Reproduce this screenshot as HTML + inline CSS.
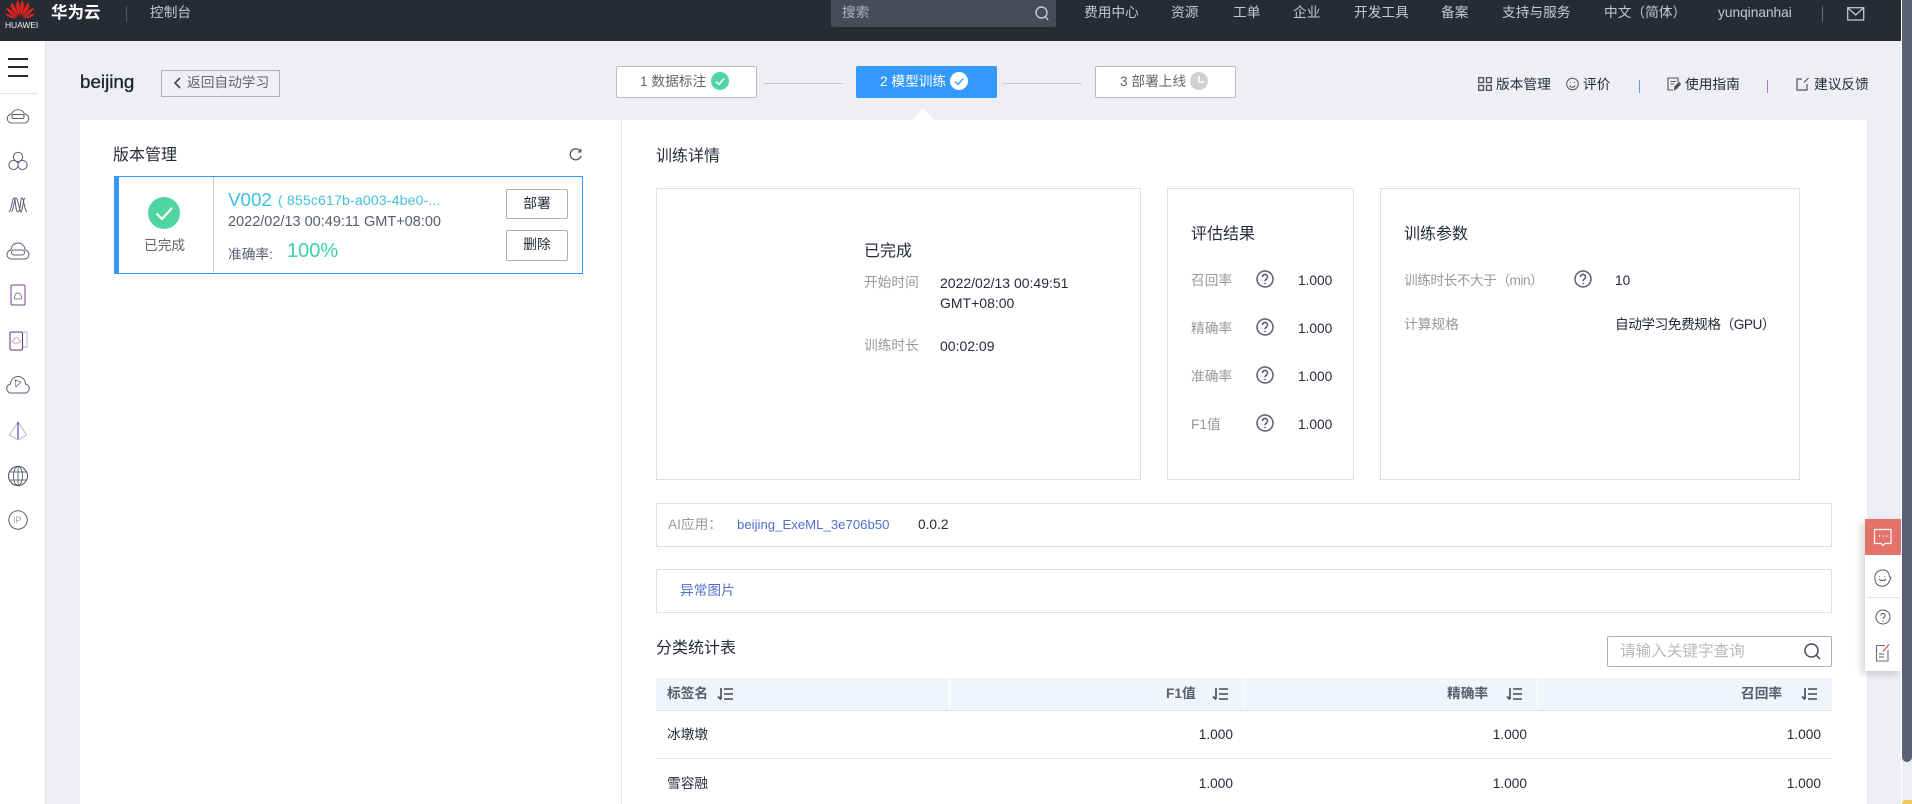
<!DOCTYPE html>
<html lang="zh-CN"><head><meta charset="utf-8"><title>beijing</title>
<style>
html,body{margin:0;padding:0;width:1912px;height:804px;overflow:hidden;background:#eeeff5}
body{position:relative;font-family:"Liberation Sans","Noto Sans CJK SC",sans-serif;font-size:13.7px;color:#252b3a}
.a{position:absolute;box-sizing:border-box}
.t{position:absolute;white-space:nowrap;line-height:20px;height:20px}
.n{color:#c6c8cf}
.g{color:#999}
.h{font-size:16px;color:#252b3a}
.box{position:absolute;box-sizing:border-box;border:1px solid #dfdfdf;background:#fff}
.btn{position:absolute;box-sizing:border-box;border:1px solid #adb0b8;border-radius:2px;background:#fff;text-align:center;line-height:28px;color:#252b3a}
.step{position:absolute;box-sizing:border-box;top:66px;height:32px;width:141px;border:1px solid #b9bbc3;border-radius:2px;background:#fff}
svg{position:absolute;overflow:visible;fill:none}
.th{font-weight:700;color:#575d6c}
.r{text-align:right}
</style></head><body>
<!-- header -->
<div class="a" style="left:0;top:0;width:1901px;height:41px;background:#282b33"></div>
<svg style="left:5px;top:0" width="30" height="22" viewBox="0 0 30 22">
<g fill="#e1231f">
<path d="M13 0C10 3 11 10 14.3 16.5C15 11 15.5 5 13 0Z"/><path d="M17 0C20 3 19 10 15.7 16.5C15 11 14.5 5 17 0Z"/>
<path d="M6.5 2.5C4.5 6 7.5 12 13.2 16.8C12 11 10.5 6 6.5 2.5Z"/><path d="M23.5 2.5C25.5 6 22.5 12 16.8 16.8C18 11 19.5 6 23.5 2.5Z"/>
<path d="M1.5 7.5C1 11 6 15 12.2 17.6C9.5 13 6 9.5 1.5 7.5Z"/><path d="M28.5 7.5C29 11 24 15 17.8 17.6C20.5 13 24 9.5 28.5 7.5Z"/>
<path d="M0 13.5C2 17 7 18.5 11.8 18.5C8 16 4 14 0 13.5Z"/><path d="M30 13.5C28 17 23 18.5 18.2 18.5C22 16 26 14 30 13.5Z"/>
</g></svg>
<div class="t" style="left:5px;top:15px;font-size:8.5px;color:#f0f0f0;letter-spacing:-.1px">HUAWEI</div>
<div class="t" style="left:51px;top:3px;font-size:16.5px;font-weight:700;color:#fff">华为云</div>
<div class="a" style="left:126px;top:6px;width:1px;height:16px;background:#55585f"></div>
<div class="t n" style="left:150px;top:3px">控制台</div>
<div class="a" style="left:831px;top:0;width:225px;height:27px;background:#484c5a;border-radius:0 0 2px 2px"></div>
<div class="t" style="left:842px;top:3px;color:#b0b3bb">搜索</div>
<svg style="left:1035px;top:6px" width="14" height="16" stroke="#c6c8cf" stroke-width="1.4"><circle cx="6.5" cy="6.5" r="5.5"/><path d="M10.5 10.5L13 14"/></svg>
<div class="t n" style="left:1084px;top:3px">费用中心</div>
<div class="t n" style="left:1171px;top:3px">资源</div>
<div class="t n" style="left:1233px;top:3px">工单</div>
<div class="t n" style="left:1293px;top:3px">企业</div>
<div class="t n" style="left:1354px;top:3px">开发工具</div>
<div class="t n" style="left:1441px;top:3px">备案</div>
<div class="t n" style="left:1502px;top:3px">支持与服务</div>
<div class="t n" style="left:1604px;top:3px">中文（简体）</div>
<div class="t n" style="left:1718px;top:3px">yunqinanhai</div>
<div class="a" style="left:1822px;top:6px;width:1px;height:16px;background:#6a6d75"></div>
<svg style="left:1847px;top:7px" width="18" height="14" stroke="#c6c8cf" stroke-width="1.3"><rect x=".7" y=".7" width="16" height="12.3"/><path d="M1 1L8.7 8L16.5 1"/></svg>

<!-- scrollbar -->
<div class="a" style="left:1901px;top:0;width:1px;height:804px;background:#fff"></div>
<div class="a" style="left:1902px;top:0;width:10px;height:762px;background:#5d6175;border-radius:0 0 5px 5px"></div>
<div class="a" style="left:1902px;top:800px;width:10px;height:4px;background:#f1c65a;border-radius:4px 0 0 0"></div>

<!-- sidebar -->
<div class="a" style="left:0;top:41px;width:46px;height:763px;background:#fff;border-right:1px solid #e2e3e8"></div>
<div class="a" style="left:8px;top:58px;width:20px;height:2px;background:#252b3a"></div>
<div class="a" style="left:8px;top:66px;width:20px;height:2px;background:#252b3a"></div>
<div class="a" style="left:8px;top:75px;width:20px;height:2px;background:#252b3a"></div>
<div class="a" style="left:0;top:93px;width:38px;height:1px;background:#dfe1e6"></div>
<svg style="left:0;top:100px" width="46" height="440" stroke="#5b6078" stroke-width="1">
<path d="M12 24a4.5 4.5 0 0 1-.5-9a7 7 0 0 1 13 0a4.5 4.5 0 0 1-.5 9Z" transform="translate(0,-1)"/><rect x="12" y="14.5" width="12" height="4" rx="1.5"/><path d="M11 23h14" stroke="#bbb" stroke-width="2"/>
<circle cx="18" cy="57" r="4.6"/><circle cx="13.5" cy="65" r="4.6"/><circle cx="22.5" cy="65" r="4.6"/>
<path d="M9 112C12 110 12 98 14 98C16 98 15 112 18 112C21 112 20 98 22 98C24 98 24 110 27 112M11.5 112C14 110 14 98 16 98C18 98 19 110 21 112C23 110 23 98 25 98" />
<path d="M12 159a4.5 4.5 0 0 1-1-9a7 7 0 0 1 14 0a4.5 4.5 0 0 1-1 9Z"/><rect x="11.5" y="150" width="13" height="5" rx="2.5"/>
<rect x="11" y="185" width="14" height="20" rx="1.5" stroke="#7a3d8f"/><path d="M15 199a2 2 0 0 1 0-3a3 3 0 0 1 6 0a2 2 0 0 1 0 3Z" stroke-width=".8"/>
<rect x="10" y="232" width="12.500" height="18" rx="1.500" stroke="#6a2d80"/><path d="M23 232h4v15h-4M14 243a1.500 1.500 0 0 1 0-3a2.500 2.500 0 0 1 5 0a1.500 1.500 0 0 1 0 3Z" stroke-width=".7" stroke="#999"/>
<path d="M12 293a4.500 4.500 0 0 1-1.500-9a7.500 7.500 0 0 1 15 0a4.500 4.500 0 0 1-1.500 9Z"/><path d="M15 280l6 2l-5 5Z" stroke-width=".7"/>
<path d="M18 322L9.500 335L18 340L26.500 335Z" stroke="#aab" stroke-width=".8"/><path d="M18 322V339" stroke="#3f51b5" stroke-width="1.200"/>
<circle cx="18" cy="376" r="9.500" stroke="#444a5e"/><ellipse cx="18" cy="376" rx="4.500" ry="9.500" stroke="#444a5e" stroke-width=".8"/><path d="M9 372h18M9 380h18M18 366v20" stroke="#444a5e" stroke-width=".8"/>
<circle cx="18" cy="420" r="9.200"/></svg>
<div class="t" style="left:13px;top:510px;font-size:9px;color:#9a9ea8">IP</div>

<!-- title row -->
<div class="t" style="left:80px;top:70px;font-size:18.8px;line-height:24px;height:24px;color:#1f2433;-webkit-text-stroke:.35px #1f2433">beijing</div>
<div class="a" style="left:161px;top:70px;width:119px;height:27px;border:1px solid #adb0b8"></div>
<svg style="left:174px;top:77px" width="7" height="12" stroke="#444" stroke-width="1.600"><path d="M6 1L1 6L6 11"/></svg>
<div class="t" style="left:187px;top:73px;color:#666">返回自动学习</div>

<!-- steps -->
<div class="step" style="left:616px"></div>
<div class="t" style="left:640px;top:72px;color:#666">1 数据标注</div>
<svg style="left:711px;top:72px" width="18" height="18"><circle cx="9" cy="9" r="9" fill="#4fd4a4"/><path d="M5 9.500L8 12.500L13 6.500" stroke="#fff" stroke-width="1.500"/></svg>
<div class="a" style="left:764px;top:83px;width:79px;height:1px;background:#c4c6cc"></div>
<div class="a" style="left:856px;top:66px;width:141px;height:32px;background:#3399ff;border-radius:2px"></div>
<div class="t" style="left:880px;top:72px;color:#fff">2 模型训练</div>
<svg style="left:950px;top:72px" width="18" height="18"><circle cx="9" cy="9" r="9" fill="#fff"/><path d="M5 9.500L8 12.500L13 6.500" stroke="#3399ff" stroke-width="1.300"/></svg>
<div class="a" style="left:1003px;top:83px;width:79px;height:1px;background:#c4c6cc"></div>
<div class="step" style="left:1095px"></div>
<div class="t" style="left:1120px;top:72px;color:#666">3 部署上线</div>
<svg style="left:1190px;top:72px" width="18" height="18"><circle cx="9" cy="9" r="9" fill="#d0d0d2"/><path d="M9 4V10H14" stroke="#fff" stroke-width="1.600"/></svg>

<!-- top right links -->
<svg style="left:1478px;top:77px" width="14" height="14" stroke="#555" stroke-width="1.400"><rect x=".7" y=".7" width="4.800" height="4.800"/><rect x="8.500" y=".7" width="4.800" height="4.800"/><rect x=".7" y="8.500" width="4.800" height="4.800"/><rect x="8.500" y="8.500" width="4.800" height="4.800"/></svg>
<div class="t" style="left:1496px;top:75px">版本管理</div>
<svg style="left:1566px;top:77px" width="14" height="14" stroke="#555" stroke-width="1"><circle cx="6.500" cy="7" r="5.800"/><path d="M3.800 8.500a3 3 0 0 0 5.400 0M4.500 5v.8M8.500 5v.8"/></svg>
<div class="t" style="left:1583px;top:75px">评价</div>
<div class="a" style="left:1639px;top:80px;width:1px;height:13px;background:#5b9df0"></div>
<svg style="left:1667px;top:77px" width="14" height="14" stroke="#555" stroke-width="1.100"><path d="M11 5V1H1V13H6M3.500 4.500H9M3.500 7H7"/><path d="M7.500 12.500L8 9.500L12 5.500L13.500 7L9.500 11.500Z" fill="#555"/></svg>
<div class="t" style="left:1685px;top:75px">使用指南</div>
<div class="a" style="left:1767px;top:80px;width:1px;height:13px;background:#a77cc0"></div>
<svg style="left:1796px;top:77px" width="14" height="14" stroke="#555" stroke-width="1.200"><path d="M6 2H1V13H11V7M8 5.500L12.500 1"/></svg>
<div class="t" style="left:1814px;top:75px">建议反馈</div>

<!-- main white -->
<div class="a" style="left:80px;top:120px;width:1787px;height:684px;background:#fff"></div>
<div class="a" style="left:621px;top:120px;width:1px;height:684px;background:#dfe1e6"></div>
<svg style="left:912px;top:108px" width="22" height="12"><path d="M0 12L11 0L22 12Z" fill="#fff"/></svg>

<!-- left panel -->
<div class="t h" style="left:113px;top:146px">版本管理</div>
<svg style="left:569px;top:148px" width="13" height="13" stroke="#555" stroke-width="1.300"><path d="M11.500 3.500A5.500 5.500 0 1 0 12 8"/><path d="M12 .5V4H8.500" stroke-width="1"/></svg>
<div class="a" style="left:114px;top:176px;width:469px;height:98px;border:1px solid #3399ff;background:#fff"></div>
<div class="a" style="left:115px;top:177px;width:4px;height:96px;background:#3399ff"></div>
<div class="a" style="left:213px;top:177px;width:1px;height:96px;background:#c9cbd0"></div>
<svg style="left:148px;top:197px" width="32" height="32"><circle cx="16" cy="16" r="16" fill="#4fd4a4"/><path d="M8.500 16.500L14 22L24 11" stroke="#fff" stroke-width="2.200"/></svg>
<div class="t" style="left:144px;top:236px;color:#666">已完成</div>
<div class="t" style="left:228px;top:190px;font-size:18.8px;color:#3cbfe0">V002</div>
<div class="t" style="left:278px;top:191px;font-size:14.2px;color:#44c0dc;letter-spacing:.1px">( 855c617b-a003-4be0-...</div>
<div class="t" style="left:228px;top:212px;color:#575d6c;font-size:14.5px">2022/02/13 00:49:11 GMT+08:00</div>
<div class="t" style="left:228px;top:245px;color:#575d6c">准确率:</div>
<div class="t" style="left:287px;top:241px;font-size:20px;color:#3dd1a2">100%</div>
<div class="btn" style="left:506px;top:189px;width:62px;height:30px">部署</div>
<div class="btn" style="left:506px;top:230px;width:62px;height:31px">删除</div>

<!-- training details -->
<div class="t h" style="left:656px;top:147px">训练详情</div>
<div class="box" style="left:656px;top:188px;width:485px;height:292px"></div>
<div class="box" style="left:1167px;top:188px;width:187px;height:292px"></div>
<div class="box" style="left:1380px;top:188px;width:420px;height:292px"></div>

<div class="t h" style="left:864px;top:242px">已完成</div>
<div class="t g" style="left:864px;top:273px">开始时间</div>
<div class="t" style="left:940px;top:273px;font-size:14px">2022/02/13 00:49:51</div>
<div class="t" style="left:940px;top:293px;font-size:14px">GMT+08:00</div>
<div class="t g" style="left:864px;top:336px">训练时长</div>
<div class="t" style="left:940px;top:336px;font-size:14px">00:02:09</div>

<div class="t h" style="left:1191px;top:225px">评估结果</div>
<div class="t g" style="left:1191px;top:271px">召回率</div>
<div class="t g" style="left:1191px;top:319px">精确率</div>
<div class="t g" style="left:1191px;top:367px">准确率</div>
<div class="t g" style="left:1191px;top:415px">F1值</div>
<svg style="left:1256px;top:270px" width="18" height="164" stroke="#575d6c" stroke-width="1.500">
<g><circle cx="9" cy="9" r="8"/><path d="M6.500 7a2.500 2.500 0 1 1 3.800 2.100C9.400 9.700 9 10.200 9 11.200"/><path d="M9 12.800v1.400"/></g>
<g transform="translate(0,48)"><circle cx="9" cy="9" r="8"/><path d="M6.500 7a2.500 2.500 0 1 1 3.800 2.100C9.400 9.700 9 10.200 9 11.200"/><path d="M9 12.800v1.400"/></g>
<g transform="translate(0,96)"><circle cx="9" cy="9" r="8"/><path d="M6.500 7a2.500 2.500 0 1 1 3.800 2.100C9.400 9.700 9 10.200 9 11.200"/><path d="M9 12.800v1.400"/></g>
<g transform="translate(0,144)"><circle cx="9" cy="9" r="8"/><path d="M6.500 7a2.500 2.500 0 1 1 3.800 2.100C9.400 9.700 9 10.200 9 11.200"/><path d="M9 12.800v1.400"/></g>
</svg>
<div class="t" style="left:1298px;top:271px">1.000</div>
<div class="t" style="left:1298px;top:319px">1.000</div>
<div class="t" style="left:1298px;top:367px">1.000</div>
<div class="t" style="left:1298px;top:415px">1.000</div>

<div class="t h" style="left:1404px;top:225px">训练参数</div>
<div class="t g" style="left:1404px;top:271px;letter-spacing:-.5px">训练时长不大于（min）</div>
<svg style="left:1574px;top:270px" width="18" height="18" stroke="#575d6c" stroke-width="1.500"><circle cx="9" cy="9" r="8"/><path d="M6.500 7a2.500 2.500 0 1 1 3.800 2.100C9.400 9.700 9 10.200 9 11.200"/><path d="M9 12.800v1.400"/></svg>
<div class="t" style="left:1615px;top:271px">10</div>
<div class="t g" style="left:1404px;top:315px">计算规格</div>
<div class="t" style="left:1615px;top:315px;letter-spacing:-.5px">自动学习免费规格（GPU）</div>

<!-- AI app -->
<div class="box" style="left:656px;top:503px;width:1176px;height:44px"></div>
<div class="t g" style="left:668px;top:515px">AI应用：</div>
<div class="t" style="left:737px;top:515px;color:#526ecc;font-size:13.2px">beijing_ExeML_3e706b50</div>
<div class="t" style="left:918px;top:515px">0.0.2</div>
<div class="box" style="left:656px;top:569px;width:1176px;height:44px"></div>
<div class="t" style="left:680px;top:581px;color:#526ecc">异常图片</div>

<!-- table -->
<div class="t h" style="left:656px;top:639px">分类统计表</div>
<div class="a" style="left:1607px;top:636px;width:225px;height:31px;border:1px solid #adb0b8;border-radius:2px;background:#fff"></div>
<div class="t" style="left:1620px;top:642px;font-size:15.6px;color:#b8bac0">请输入关键字查询</div>
<svg style="left:1804px;top:643px" width="17" height="17" stroke="#444a5e" stroke-width="1.500"><circle cx="7.500" cy="7.500" r="6.500"/><path d="M12 12L16 16"/></svg>

<div class="a" style="left:656px;top:678px;width:1176px;height:33px;background:#f0f4fb;border-bottom:1px solid #dfe1e6"></div>
<div class="a" style="left:949px;top:678px;width:1px;height:32px;background:#fff"></div>
<div class="a" style="left:1243px;top:678px;width:1px;height:32px;background:#fff"></div>
<div class="a" style="left:1537px;top:678px;width:1px;height:32px;background:#fff"></div>
<div class="t th" style="left:667px;top:684px">标签名</div>
<div class="t th" style="left:1166px;top:684px">F1值</div>
<div class="t th" style="left:1447px;top:684px">精确率</div>
<div class="t th" style="left:1741px;top:684px">召回率</div>
<svg style="left:717px;top:688px" width="17" height="13" stroke="#444a5e" stroke-width="1.600"><path d="M4 0V11M1 8.500L4 11.500M7 1H16M7 6H16M7 11H16"/></svg>
<svg style="left:1212px;top:688px" width="17" height="13" stroke="#444a5e" stroke-width="1.600"><path d="M4 0V11M1 8.500L4 11.500M7 1H16M7 6H16M7 11H16"/></svg>
<svg style="left:1506px;top:688px" width="17" height="13" stroke="#444a5e" stroke-width="1.600"><path d="M4 0V11M1 8.500L4 11.500M7 1H16M7 6H16M7 11H16"/></svg>
<svg style="left:1801px;top:688px" width="17" height="13" stroke="#444a5e" stroke-width="1.600"><path d="M4 0V11M1 8.500L4 11.500M7 1H16M7 6H16M7 11H16"/></svg>

<div class="t" style="left:667px;top:725px">冰墩墩</div>
<div class="t r" style="left:1133px;width:100px;top:725px">1.000</div>
<div class="t r" style="left:1427px;width:100px;top:725px">1.000</div>
<div class="t r" style="left:1721px;width:100px;top:725px">1.000</div>
<div class="a" style="left:656px;top:758px;width:1176px;height:1px;background:#dfe1e6"></div>
<div class="t" style="left:667px;top:774px">雪容融</div>
<div class="t r" style="left:1133px;width:100px;top:774px">1.000</div>
<div class="t r" style="left:1427px;width:100px;top:774px">1.000</div>
<div class="t r" style="left:1721px;width:100px;top:774px">1.000</div>

<!-- floating -->
<div class="a" style="left:1865px;top:519px;width:36px;height:152px;background:#fff;box-shadow:-3px 3px 8px rgba(0,0,0,.18)"></div>
<div class="a" style="left:1865px;top:519px;width:36px;height:36px;background:#e6736b"></div>
<div class="a" style="left:1866px;top:597px;width:34px;height:1px;background:#dfe1e6"></div>
<svg style="left:1873px;top:528px" width="20" height="20" stroke="#fff" stroke-width="1.200"><path d="M1.500 1.500H18V15.500H12L10 17.500L8 15.500H1.500Z"/><path d="M6 8h1M9.500 8h1M13 8h1" stroke-width="1.500"/></svg>
<svg style="left:1874px;top:569px" width="18" height="19" stroke="#666" stroke-width="1.100"><path d="M15 13C13 17 8 18 5 16.500C1 15 .5 10 1 7C2 2.500 6 .5 10 1C13 1.500 15.500 4 15.500 8L17 8.500Z"/><path d="M5 10a4 3 0 0 0 7 0M5.500 7v.8M10.500 7v.8"/></svg>
<svg style="left:1875px;top:609px" width="16" height="16" stroke="#555" stroke-width="1"><circle cx="8" cy="8" r="7"/><path d="M6 6.500a2 2 0 1 1 3 1.700C8.300 8.700 8 9 8 10M8 11.500v1.200"/></svg>
<svg style="left:1875px;top:644px" width="16" height="18" stroke="#6a6d78" stroke-width="1.100"><path d="M10 1.500H1.500V17H13V6"/><path d="M4 10H9M4 13H9" stroke="#555"/><path d="M8 7.500L14 .5" stroke="#c0402f"/></svg>
</body></html>
